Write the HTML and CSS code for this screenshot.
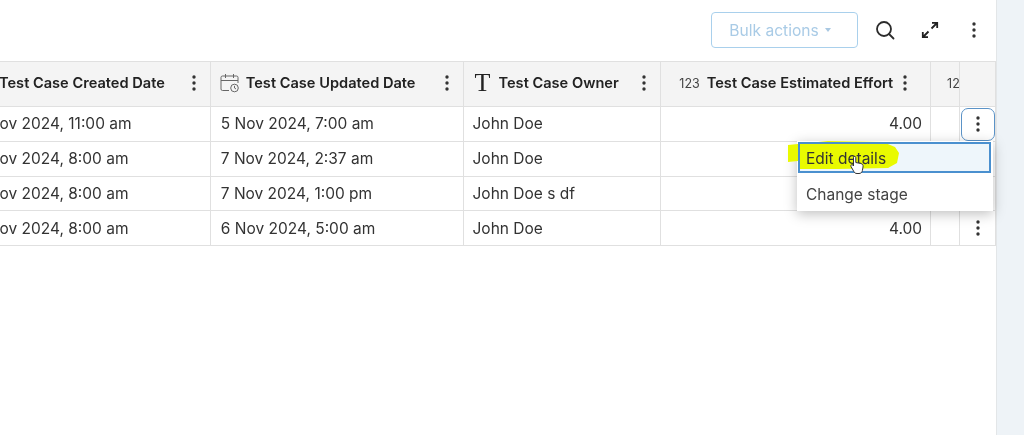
FILE: index.html
```html
<!DOCTYPE html>
<html lang="en">
<head>
<meta charset="utf-8">
<title>Test cases</title>
<link rel="stylesheet" href="styles.css">
</head>
<body>
<div class="page">
  <main class="main">
    <div class="toolbar">
      <button class="bulk">Bulk actions<span class="caret"></span></button>
      <button class="tool search"><svg width="22" height="22" viewBox="0 0 22 22" fill="none" stroke="#2b2b2b" stroke-width="1.8" stroke-linecap="round"><circle cx="10" cy="10" r="7"/><path d="M15 15l4.5 4.5"/></svg></button>
      <button class="tool expand"><svg width="20" height="20" viewBox="0 0 20 20" fill="none" stroke="#222" stroke-width="1.8"><path d="M11.5 8.5L17 3M12 2.8h5.2V8M8.500 11.500L3 17M2.800 12v5.200H8"/></svg></button>
      <button class="tool dots"><svg class="kebab" viewBox="0 0 4 16"><circle cx="2" cy="2" r="1.700"/><circle cx="2" cy="8" r="1.700"/><circle cx="2" cy="14" r="1.700"/></svg></button>
    </div>
    <div class="viewport">
      <div class="grid">
        <div class="row head">
          <div class="cell c1"><span class="icon"></span><span class="title">Test Case Created Date</span><svg class="kebab" viewBox="0 0 4 16"><circle cx="2" cy="2" r="1.700"/><circle cx="2" cy="8" r="1.700"/><circle cx="2" cy="14" r="1.700"/></svg></div>
          <div class="cell c2"><svg class="icon" viewBox="0 0 20 20" fill="none" stroke="#666" stroke-width="1"><path d="M9 17.500H2.500a1.500 1.500 0 0 1-1.500-1.500V4.500A1.500 1.500 0 0 1 2.500 3h14A1.500 1.500 0 0 1 18 4.500V10M1 7.500h17M5.500 1v4M13.500 1v4"/><circle cx="14.500" cy="15" r="3.800"/><path d="M14.500 12.800V15l1.500 1"/></svg><span class="title">Test Case Updated Date</span><svg class="kebab" viewBox="0 0 4 16"><circle cx="2" cy="2" r="1.700"/><circle cx="2" cy="8" r="1.700"/><circle cx="2" cy="14" r="1.700"/></svg></div>
          <div class="cell c3"><span class="icon type-t">T</span><span class="title">Test Case Owner</span><svg class="kebab" viewBox="0 0 4 16"><circle cx="2" cy="2" r="1.700"/><circle cx="2" cy="8" r="1.700"/><circle cx="2" cy="14" r="1.700"/></svg></div>
          <div class="cell c4"><span class="num-icon">123</span><span class="title">Test Case Estimated Effort</span><svg class="kebab" viewBox="0 0 4 16"><circle cx="2" cy="2" r="1.700"/><circle cx="2" cy="8" r="1.700"/><circle cx="2" cy="14" r="1.700"/></svg></div>
          <div class="cell c5"><span class="num-icon">12</span></div>
          <div class="cell c6"></div>
        </div>
        <div class="row r35">
          <div class="cell c1">5 Nov 2024, 11:00 am</div><div class="cell c2">5 Nov 2024, 7:00 am</div><div class="cell c3">John Doe</div><div class="cell c4 right">4.00</div><div class="cell c5"></div>
          <div class="cell c6"><span class="act active"><svg class="kebab" viewBox="0 0 4 16"><circle cx="2" cy="2" r="1.700"/><circle cx="2" cy="8" r="1.700"/><circle cx="2" cy="14" r="1.700"/></svg></span></div>
        </div>
        <div class="row r35">
          <div class="cell c1">5 Nov 2024, 8:00 am</div><div class="cell c2">7 Nov 2024, 2:37 am</div><div class="cell c3">John Doe</div><div class="cell c4 right"></div><div class="cell c5"></div><div class="cell c6"></div>
        </div>
        <div class="row r34 lower">
          <div class="cell c1">5 Nov 2024, 8:00 am</div><div class="cell c2">7 Nov 2024, 1:00 pm</div><div class="cell c3">John Doe s df</div><div class="cell c4 right"></div><div class="cell c5"></div><div class="cell c6"></div>
        </div>
        <div class="row r35 lower">
          <div class="cell c1">5 Nov 2024, 8:00 am</div><div class="cell c2">6 Nov 2024, 5:00 am</div><div class="cell c3">John Doe</div><div class="cell c4 right">4.00</div><div class="cell c5"></div>
          <div class="cell c6"><span class="act"><svg class="kebab" viewBox="0 0 4 16"><circle cx="2" cy="2" r="1.700"/><circle cx="2" cy="8" r="1.700"/><circle cx="2" cy="14" r="1.700"/></svg></span></div>
        </div>
      </div>
    </div>
    <div class="menu">
      <div class="item selected">
        <svg class="marker" width="112" height="30" viewBox="0 0 112 30"><path d="M0 4 L10 3 L40 0 L95 1 L107 6 L111 12 L109 22 L100 27 L50 28 L11 28 L10 20 L0 21Z" fill="#e9fa00"/></svg>
        <span class="item-text">Edit details</span>
      </div>
      <div class="item plain">Change stage</div>
    </div>
    <svg class="cursor" width="16" height="20" viewBox="0 0 16 20"><path d="M4.500 2.500c0-1.500 2.300-1.500 2.300 0v5l5 1c2 .5 2.500 1.500 2.200 3.500l-.6 3.500c-.3 1.800-1.500 3-3.400 3H8c-1.500 0-2.500-.7-3.200-2L2 11.500c-.7-1.500 1-2.500 2-1.300l.5.800z" fill="#fff" stroke="#333" stroke-width="1"/></svg>
  </main>
  <aside class="side"></aside>
</div>
</body>
</html>
```
FILE: styles.css
```css
* { box-sizing: border-box; }
html, body { margin: 0; height: 100%; }
body { background: #fff; font-family: Inter, "Liberation Sans", sans-serif; color: #333; overflow: hidden; }
.page { display: flex; width: 1024px; height: 435px; filter: blur(.45px); }
.main { position: relative; width: 997px; border-right: 1px solid #e3e6e8; }
.side { flex: 1; background: #eef3f7; }
.toolbar { height: 61px; display: flex; align-items: flex-start; padding-top: 12px; }
button { background: none; border: 0; padding: 0; font: inherit; display: flex; align-items: center; justify-content: center; }
.bulk { margin-left: 711px; width: 147px; height: 36px; padding-right: 9px; border: 1px solid #a9d0ec; border-radius: 4px; color: #a9cbe6; font-size: 15.600px; }
.caret { margin-left: 6px; border: 3.500px solid transparent; border-top: 4px solid #a9c8e2; border-bottom: 0; }
.tool { height: 36px; }
.search { margin-left: 16px; width: 22px; }
.expand { margin-left: 24px; width: 20px; }
.dots { margin-left: 28px; width: 12px; }
.kebab { width: 4px; height: 16px; fill: #333; flex: none; }
.viewport { overflow: hidden; width: 996px; }
.grid { margin-left: -36px; width: 1032px; border-top: 1px solid #e0e0e0; }
.row { display: flex; border-bottom: 1px solid #e0e0e0; font-size: 15.500px; }
.head { height: 45px; background: #f4f4f4; font-weight: 600; font-size: 14.600px; color: #222; }
.r35 { height: 35px; }
.r34 { height: 34px; }
.cell { display: flex; align-items: center; padding: 0 10px 2px; border-right: 1px solid #e0e0e0; overflow: hidden; white-space: nowrap; }
.lower .cell { padding-bottom: 0; }
.head .cell { padding: 0 14px 2px 9px; }
.row .c3 { padding-left: 9px; }
.row .right { padding-right: 8px; }
.c1 { width: 247px; }
.c2 { width: 253px; }
.c3 { width: 198px; }
.c4 { width: 270px; }
.c5 { width: 29px; }
.row .c6 { width: 36px; padding: 0; justify-content: center; border-right: 1px solid #e0e0e0; }
.right { justify-content: flex-end; }
.icon { width: 20px; height: 20px; flex: none; margin-right: 6px; }
.type-t { font-family: "Liberation Serif", serif; font-size: 26px; font-weight: 400; line-height: 20px; text-align: center; color: #222; }
.num-icon { font-size: 12.500px; font-weight: 400; color: #444; margin: 0 6px 0 9px; }
.c5 .num-icon { margin: 0 0 0 7px; }
.title { flex: 1; }
.head .c4 .title { flex: none; margin-right: 10px; }
.head .c4 .num-icon { margin-right: 7px; }
.act { width: 34px; height: 33px; display: flex; align-items: center; justify-content: center; border-radius: 7px; }
.active { border: 1.500px solid #5b93c7; }
.menu { position: absolute; left: 797px; top: 141px; width: 196px; height: 70px; background: #fff; box-shadow: 0 3px 12px rgba(0,0,0,.25); font-size: 15.500px; color: #444; }
.item { height: 35px; display: flex; align-items: center; padding-left: 9px; }
.plain { padding-top: 2px; }
.selected { position: relative; margin: 1px 2px 3px 1px; height: 31px; background: #eef6fb; padding-left: 8px; padding-top: 1px; color: #333; }
.selected::after { content: ""; position: absolute; inset: 0; border: 2px solid #4a90cf; }
.marker { position: absolute; left: -10px; top: -1px; }
.item-text { position: relative; }
.cursor { position: absolute; left: 849px; top: 155px; }
```
